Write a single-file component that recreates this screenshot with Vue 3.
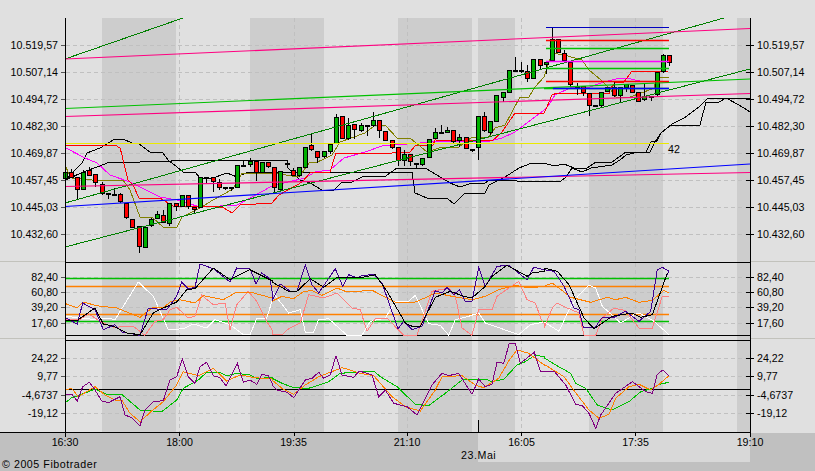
<script setup>
const seg = (xo, yo, s) =>
  s.split(' ').map((p) => {
    const [x, y] = p.split(',').map(Number)
    return `${(xo + x / 3).toFixed(1)},${(yo + y / 3).toFixed(1)}`
  }).join(' ')
const join3 = (y, a, b, c) => [seg(0, y, a), seg(272, y, b), seg(544, y, c)].join(' ')

const bands = [[102, 74], [250, 74], [398, 74], [478, 37], [589, 74], [737, 13]]
const vGrid = [179.5, 294, 407.5, 521.5, 635.5]
const hGrid = [45.5, 72.5, 99.5, 126.5, 153.5, 180.5, 207.5, 234.5, 277.5, 292.5, 307.5, 323.5, 358.5, 376.5, 395.5, 413.5]
const leftLabels = [
  ['10.519,57', 45.5], ['10.507,14', 72.5], ['10.494,72', 99.5], ['10.482,30', 126.5],
  ['10.469,87', 153.5], ['10.457,45', 180.5], ['10.445,03', 207.5], ['10.432,60', 234.5],
  ['82,40', 277.5], ['60,80', 292.5], ['39,20', 307.5], ['17,60', 323.5],
  ['24,22', 358.5], ['9,77', 376.5], ['-4,6737', 395.5], ['-19,12', 413.5],
]
const timeLabels = [['16:30', 65], ['18:00', 179.5], ['19:35', 293.5], ['21:10', 407], ['16:05', 521.5], ['17:35', 635.5], ['19:10', 750]]

const trends = [
  ['trend', 65, 59, 183, 18], ['trend', 65, 203, 724, 18], ['trend', 65, 247, 750, 69],
  ['pink slim', 65, 59, 750, 28.5], ['pink slim', 65, 116.5, 750, 93.5], ['pink slim', 65, 186.5, 750, 172.5],
  ['lime slim', 65, 108.5, 750, 79], ['blue slim', 65, 206.5, 750, 164],
  ['yellow', 65, 143.5, 669, 143.5],
]
const levels = [
  ['navy', 27.5, 546], ['red soft', 40.5, 546], ['lime soft', 48.5, 546], ['magenta soft', 61.5, 546],
  ['lime soft', 68.5, 546], ['red soft', 81.5, 546], ['lime soft', 88.5, 544], ['blue soft', 88.5, 553],
]
const oscLevels = [['lime', 278.5], ['amber', 286.5], ['amber', 314.5], ['lime', 321.5]]

const priceLines = [
  ['black', '66,180 72,173 82,163 87,153 100,148 110,142 115,139 123,139 132,143 138,143 150,152 163,153 168,160 177,167 183,172 195,172 200,178 213,178 227,173 237,177 248,172 412,172 415,193 427,198 447,198 454,204 465,193 485,193 489,185 499,180 505,177 519,168 532,163 544,163 554,166 564,164 574,168 587,168 596,162 612,162 626,152 646,152 651,142 657,141 661,133 671,125 700,125 706,102 719,102 726,98 750,98'],
  ['black', '66,180 83,172 100,166 107,163 140,162 145,161 170,162 173,160 287,160 288,168 300,180 310,183 322,190 334,190 342,182 352,182 362,177 385,176.5 397,168 425,168 442,178 450,183 460,187 472,183 485,183 490,180 544,182 561,181 566,177 572,168 582,172 591,168 612,165 620,160 626,155 638,152 650,152 655,142 661,133 672,124 684,118 699,107 707,99 726,98 739,105 747,110 750,112'],
  ['magenta', '66,148 85,158 97,163 110,175 130,182 140,187 160,197 177,200 200,207 220,206 237,205 250,198 272,186 288,182 305,178 315,172 330,170 344,158 365,152 382,146 407,144 420,143 442,141 490,141 502,138 515,132 535,117 544,110 549,105 555,95 570,88 590,87 604,82 616,79 626,78 640,81 669,81'],
  ['red', '66,145 115,145 120,148 122,155 123,160 128,180 133,185 139,198 160,198 173,206 200,207 213,206 224,208 232,213 240,205 272,203 279,195 297,185 302,182 310,173 330,172 336,153 392,153 410,152 416,145 433,145 435,140 492,141 502,132 515,113 544,113 547,107 552,95 557,93 609,93 609,90 616,82 624,82 632,71 668,71'],
  ['olive', '66,167 68,172 72,178 83,179 100,181 123,180 130,190 140,217 153,218 163,227 177,227 182,217 200,208 213,200 233,189 242,173 272,173 299,177 309,163 317,162 322,160 332,155 340,142 365,133 374,126 385,125 397,138 410,138 427,152 439,148 459,147 472,137 489,137 495,128 505,125 520,97 529,97 535,87 544,77 548,65 552,53 564,55 582,60 589,70 601,80 611,90 616,97 627,98 644,92 654,88 657,77 669,77'],
]

const candles = [
  ['g', 172, 178, 172, 180], ['r', 172, 177, 169, 177], ['r', 177, 189, 177, 199], ['g', 172, 189, 170, 190],
  ['r', 170, 175, 167, 175], ['r', 174, 182, 174, 187], ['r', 184, 193, 182, 195], ['d', 193, 194, 193, 199],
  ['d', 194, 195, 188, 196], ['r', 194, 201, 193, 203], ['r', 203, 217, 203, 219], ['r', 219, 227, 219, 228],
  ['r', 226, 246, 226, 253], ['g', 227, 247, 227, 248], ['g', 219, 225, 218, 227], ['g', 214, 218, 211, 219],
  ['r', 215, 222, 210, 223], ['g', 203, 223, 203, 226], ['r', 203, 206, 203, 211], ['g', 195, 206, 195, 206],
  ['r', 195, 206, 195, 209], ['r', 207, 209, 207, 213], ['g', 177, 207, 177, 208], ['d', 177, 178, 177, 183],
  ['r', 177, 181, 177, 192], ['r', 182, 187, 179, 190], ['d', 187, 188, 187, 190], ['d', 187, 188, 187, 191],
  ['g', 165, 187, 165, 188], ['d', 165, 166, 160, 167], ['g', 161, 164, 158, 167], ['r', 161, 172, 161, 181],
  ['g', 162, 172, 162, 173], ['r', 162, 166, 162, 168], ['r', 167, 187, 167, 192], ['g', 171, 189, 171, 190],
  ['d', 163, 164, 163, 167], ['r', 170, 175, 168, 175], ['g', 167, 175, 167, 177], ['g', 147, 167, 147, 168],
  ['r', 145, 149, 134, 151], ['r', 151, 157, 151, 163], ['g', 151, 156, 151, 158], ['g', 144, 151, 144, 154],
  ['g', 117, 143, 114, 144], ['r', 116, 138, 116, 139], ['g', 125, 138, 118, 140], ['r', 124, 129, 124, 139],
  ['g', 125, 130, 123, 132], ['d', 125, 126, 125, 136], ['g', 120, 125, 112, 127], ['r', 120, 130, 120, 138],
  ['r', 131, 140, 131, 141], ['r', 140, 147, 140, 149], ['r', 147, 160, 147, 166], ['g', 154, 160, 150, 166],
  ['r', 154, 161, 154, 166], ['d', 163, 164, 163, 169], ['g', 158, 164, 158, 166], ['g', 139, 157, 139, 158],
  ['g', 132, 138, 128, 139], ['d', 132, 133, 125, 134], ['g', 130, 132, 127, 133], ['r', 130, 141, 130, 143],
  ['g', 137, 140, 134, 147], ['r', 137, 148, 137, 148], ['d', 149, 150, 149, 152], ['g', 116, 147, 116, 160],
  ['r', 116, 130, 112, 132], ['g', 121, 132, 121, 135], ['g', 95, 121, 95, 122], ['g', 92, 97, 92, 102],
  ['g', 70, 92, 70, 93], ['d', 70, 71, 57, 71], ['d', 70, 71, 62, 73], ['r', 71, 78, 65, 82],
  ['g', 59, 78, 59, 79], ['r', 59, 65, 59, 69], ['g', 62, 64, 62, 74], ['g', 39, 60, 27, 60],
  ['r', 39, 52, 39, 52], ['r', 53, 60, 50, 61], ['r', 62, 84, 62, 87], ['d', 86, 87, 83, 95],
  ['r', 86, 92, 86, 96], ['r', 93, 105, 93, 116], ['d', 105, 106, 105, 107], ['g', 92, 105, 92, 108],
  ['g', 87, 91, 87, 92], ['r', 87, 95, 82, 97], ['g', 87, 95, 87, 102], ['g', 84, 87, 84, 92],
  ['r', 85, 92, 85, 93], ['r', 92, 101, 92, 102], ['g', 96, 99, 84, 101], ['d', 96, 97, 96, 101],
  ['g', 72, 94, 72, 96], ['g', 55, 71, 54, 73], ['r', 55, 62, 55, 66],
].map((c, i) => ({ kind: c[0], x: Math.floor(65 + 6.17 * i), top: c[1], bottom: c[2], high: c[3], low: c[4] }))

const oscLines = [
  ['white', join3(258,
    '197,175 290,185 320,180 345,185 415,72 460,115 505,215 550,212 580,198 620,210 645,185 690,200 730,230 750,230 770,182 800,180 816,130',
    '0,100 50,165 85,155 100,222 125,222 140,185 170,182 225,232 270,232 295,190 340,180 370,130 410,130 430,112 470,197 505,202 530,232 550,185 590,175 620,165 640,195 740,230 775,200 816,192',
    '0,192 45,220 75,155 105,110 135,82 155,90 175,145 230,195 270,170 285,165 330,190 375,230')],
  ['salmon', join3(258,
    '197,185 240,185 265,167 300,190 340,208 400,205 435,232 465,190 490,185 510,155 530,148 565,180 585,175 605,112 640,140 675,135 690,215 710,140 745,100 770,130 800,190 816,215',
    '0,230 30,230 50,212 85,195 110,110 155,120 195,105 240,150 265,155 285,220 310,182 345,180 395,232 435,232 480,100 530,90 550,115 570,210 600,232 620,155 660,155 675,115 740,70 765,125 790,135 810,190 816,195',
    '0,210 25,150 40,135 70,150 105,165 120,232 155,232 175,180 210,150 245,158 265,185 285,210 325,210 355,115 375,115')],
  ['amber', join3(258,
    '197,137 232,150 250,132 290,143 350,150 420,178 460,147 490,150 510,132 540,125 585,135 610,113 670,125 710,102 750,102 816,120',
    '0,130 30,115 65,122 95,100 120,98 150,112 195,90 225,102 300,97 370,132 430,132 470,115 490,105 540,115 600,125 640,115 680,95 730,82 770,90 816,85',
    '0,85 25,75 45,90 80,118 140,133 190,118 215,125 245,118 285,133 325,127 360,97 375,105')],
  ['indigo', join3(258,
    '197,180 232,198 248,135 285,155 310,215 345,200 365,222 420,232 445,150 490,155 500,155 530,115 545,72 565,92 585,88 600,18 640,32 690,72 710,30 750,32 768,78 785,45 810,62 816,100',
    '0,130 25,78 55,100 75,100 100,20 120,80 140,105 190,32 212,85 230,50 255,60 270,52 305,50 330,75 378,212 395,190 420,215 450,205 490,98 510,105 525,88 545,110 562,95 580,130 600,130 620,28 640,85 675,25 710,22 765,65 785,28 816,35',
    '0,35 30,40 60,85 90,150 105,155 118,208 152,210 175,178 210,178 245,160 285,190 320,160 340,35 355,28 375,40 370,50')],
  ['black', join3(258,
    '197,187 232,187 285,150 310,198 340,205 380,225 420,230 460,165 490,150 530,132 560,95 585,92 640,30 690,65 750,35 816,68',
    '0,72 50,100 75,100 115,62 155,88 195,58 260,60 310,50 345,100 400,195 420,205 445,205 490,118 535,100 575,115 600,120 640,85 660,55 705,22 765,55 780,45 816,40',
    '0,30 40,40 75,80 120,180 150,212 205,175 265,165 290,178 325,170 345,115 370,45')],
]

const macdLines = [
  ['lime', join3(335,
    '197,202 215,188 240,180 285,162 320,178 365,178 420,225 485,230 530,195 550,160 595,135 620,112 660,112 680,122 710,115 750,120 770,130 816,128',
    '0,130 30,145 65,158 110,160 170,140 205,115 305,108 325,125 375,155 430,208 470,212 520,175 570,135 640,132 660,140 695,133 735,90 760,80 790,60 816,65',
    '0,68 35,90 80,115 95,145 125,160 160,210 205,225 255,200 290,170 325,160 345,148 375,142')],
  ['amber', join3(335,
    '197,165 215,160 235,185 285,155 315,180 345,195 365,195 390,235 420,260 455,228 490,200 530,150 550,110 595,122 640,100 680,138 720,120 765,128 816,132',
    '0,135 30,160 65,178 100,150 140,125 210,98 235,105 265,115 305,122 360,185 400,215 445,228 490,165 510,125 570,122 610,150 635,158 680,130 712,75 735,45 770,55 816,90',
    '0,88 60,125 100,180 135,225 165,250 195,238 215,190 255,155 285,148 320,165 345,148 375,122')],
  ['purple', join3(335,
    '197,180 215,178 232,198 248,155 268,142 285,165 305,198 325,203 360,185 375,240 395,248 420,272 435,225 460,200 490,197 510,135 530,125 547,72 565,125 585,145 600,95 620,82 640,122 660,128 678,152 712,85 730,142 750,135 770,148 785,118 805,122 816,145',
    '0,150 15,165 45,172 65,188 100,135 120,130 140,112 155,130 175,120 192,62 210,120 245,127 262,108 300,120 320,185 340,165 365,205 405,215 435,240 480,150 510,115 530,122 560,115 600,178 620,132 640,155 660,148 675,82 695,85 712,25 730,25 745,85 787,52 805,108 816,108',
    '0,108 30,108 65,150 95,208 115,212 135,235 155,280 170,240 215,175 265,140 305,170 325,175 340,118 357,105 375,122')],
]
</script>

<template>
  <div class="page">
    <svg class="chart" width="815" height="471" viewBox="0 0 815 471" xmlns="http://www.w3.org/2000/svg">
      <rect x="0" y="433" width="815" height="38" class="footer-bg" />
      <rect x="478" y="433" width="272" height="29" class="footer-day" />
      <rect v-for="(b, i) in bands" :key="'b' + i" :x="b[0]" y="18" :width="b[1]" height="415" class="band" />

      <line v-for="y in hGrid" :key="'h' + y" x1="66" x2="750" :y1="y" :y2="y" class="grid" />
      <line v-for="x in vGrid" :key="'v' + x" :x1="x" :x2="x" y1="18" y2="432" class="grid" />

      <line x1="0" x2="65" y1="261.5" y2="261.5" class="split" />
      <line x1="751" x2="815" y1="261.5" y2="261.5" class="split" />
      <line x1="0" x2="65" y1="338.5" y2="338.5" class="split" />
      <line x1="751" x2="815" y1="338.5" y2="338.5" class="split" />

      <g class="price">
        <polyline v-for="(l, i) in priceLines" :key="'p' + i" :points="l[1]" :class="['line', l[0]]" />
      </g>

      <g v-for="(c, i) in candles" :key="'c' + i">
        <line :x1="c.x + 0.5" :x2="c.x + 0.5" :y1="c.high" :y2="c.low" class="wick" />
        <rect :x="c.x - 1.5" :y="c.top + 0.5" width="4" :height="c.bottom - c.top" :class="['body', c.kind]" />
      </g>

      <line v-for="(t, i) in trends" :key="'t' + i" :x1="t[1]" :y1="t[2]" :x2="t[3]" :y2="t[4]" :class="['line', t[0]]" />
      <line v-for="(l, i) in levels" :key="'l' + i" :x1="l[2]" x2="669" :y1="l[1]" :y2="l[1]" :class="['line', l[0]]" />
      <text x="668" y="153" class="label">42</text>

      <line x1="65" x2="750" y1="262.5" y2="262.5" class="axis" />
      <line x1="65" x2="750" y1="335.5" y2="335.5" class="axis" />
      <line x1="65" x2="750" y1="340.5" y2="340.5" class="axis" />

      <line v-for="(l, i) in oscLevels" :key="'o' + i" x1="65" x2="669" :y1="l[1]" :y2="l[1]" :class="['line', 'soft', l[0]]" />
      <polyline v-for="(l, i) in oscLines" :key="'q' + i" :points="l[1]" :class="['line', l[0]]" />

      <line x1="65" x2="750" y1="389.5" y2="389.5" class="axis" />
      <polyline v-for="(l, i) in macdLines" :key="'m' + i" :points="l[1]" :class="['line', l[0]]" />

      <line x1="0" x2="750" y1="432.5" y2="432.5" class="axis" />
      <line x1="65.5" x2="65.5" y1="18" y2="437" class="axis" />
      <line x1="750.5" x2="750.5" y1="18" y2="437" class="axis" />
      <line v-for="x in vGrid" :key="'k' + x" :x1="x" :x2="x" y1="433" y2="436" class="axis" />
      <line x1="478.5" x2="478.5" y1="420" y2="433" class="axis" />

      <g v-for="l in leftLabels" :key="l[0]">
        <line x1="61" x2="65" :y1="l[1]" :y2="l[1]" class="tick-left" />
        <line x1="746" x2="754" :y1="l[1]" :y2="l[1]" class="axis" />
        <text x="58" :y="l[1] + 3" text-anchor="end" class="label">{{ l[0] }}</text>
        <text x="757" :y="l[1] + 3" class="label">{{ l[0] }}</text>
      </g>

      <text v-for="t in timeLabels" :key="t[0]" :x="t[1]" y="446" text-anchor="middle" class="label">{{ t[0] }}</text>
      <text x="461" y="459" class="label wide">23.Mai</text>
      <text x="2" y="468" class="label wide">© 2005 Fibotrader</text>
    </svg>
  </div>
</template>

<style scoped>
.page {
  width: 815px;
  height: 471px;
  background: #e0e0e0;
  overflow: hidden;
}
.chart {
  display: block;
}
.footer-bg {
  fill: #c0c0c0;
}
.footer-day {
  fill: #d8d8d8;
}
.band {
  fill: #cdcdcd;
}
.grid {
  stroke: #c0c0c0;
  stroke-width: 1;
  stroke-dasharray: 4 3;
  shape-rendering: crispEdges;
}
.split {
  stroke: #c2c2bc;
  stroke-width: 1;
  shape-rendering: crispEdges;
}
.axis {
  stroke: #000;
  stroke-width: 1;
  shape-rendering: crispEdges;
}
.tick-left {
  stroke: #555;
  stroke-width: 1;
  shape-rendering: crispEdges;
}
.label {
  font-family: "Liberation Sans", Arial, sans-serif;
  font-size: 10.67px;
  fill: #000;
}
.wide {
  letter-spacing: 0.55px;
}
.line {
  fill: none;
  stroke-width: 1;
  shape-rendering: crispEdges;
}
.soft {
  stroke-width: 1.4;
  shape-rendering: geometricPrecision;
}
.slim {
  stroke-width: 1.1;
  shape-rendering: geometricPrecision;
}
.trend { stroke: #008000; }
.pink { stroke: #ff0080; }
.lime { stroke: #00c000; }
.blue { stroke: #0000ff; }
.navy { stroke: #0000c0; }
.yellow { stroke: #eaea00; }
.red { stroke: #ff0000; }
.magenta { stroke: #ff00ff; }
.olive { stroke: #808000; }
.black { stroke: #000; }
.white { stroke: #fff; }
.salmon { stroke: #ff8080; }
.amber { stroke: #ff8000; }
.indigo { stroke: #400090; }
.purple { stroke: #800080; }
.wick {
  stroke: #000;
  stroke-width: 1;
  shape-rendering: crispEdges;
}
.body {
  stroke: #000;
  stroke-width: 1;
  shape-rendering: crispEdges;
}
.body.g { fill: #00b000; }
.body.r { fill: #ff0000; }
.body.d { fill: #000; }
</style>
